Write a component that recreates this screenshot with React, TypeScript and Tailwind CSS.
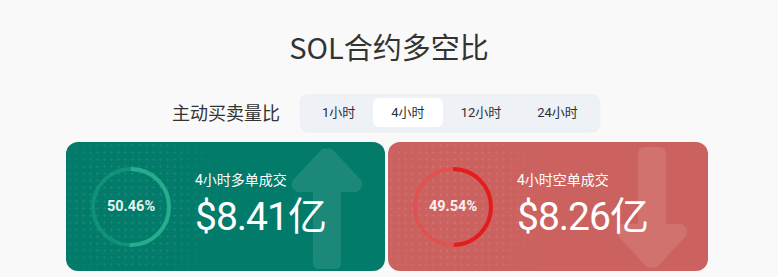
const tabs = ["1小时", "4小时", "12小时", "24小时"];

interface SideCardProps {
  tone: "long" | "short";
  percent: number;
  title: string;
  amount: string;
}

function Ring({ percent, track, bar }: { percent: number; track: string; bar: string }) {
  const r = 38;
  const c = 2 * Math.PI * r;
  return (
    <svg width="80" height="80" viewBox="0 0 80 80" className="block">
      <circle cx="40" cy="40" r={r} fill="none" stroke={track} strokeWidth="4" />
      <circle
        cx="40"
        cy="40"
        r={r}
        fill="none"
        stroke={bar}
        strokeWidth="4"
        strokeDasharray={`${(c * percent) / 100} ${c}`}
        transform="rotate(-90 40 40)"
      />
    </svg>
  );
}

function SideCard({ tone, percent, title, amount }: SideCardProps) {
  const long = tone === "long";
  return (
    <div
      className={
        "relative h-[129px] rounded-[12px] overflow-hidden flex " +
        (long ? "bg-[#027b6a]" : "bg-[#cc625f]")
      }
    >
      {/* dotted halo behind the ring */}
      <div className="absolute inset-0 bg-[radial-gradient(rgba(255,255,255,0.09)_1.2px,transparent_1.3px)] bg-[length:7px_7px] [mask-image:radial-gradient(circle_at_65px_64px,black_0px,black_45px,transparent_110px)]" />

      {/* big arrow */}
      {long ? (
        <svg className="absolute left-[223px] top-[5px]" width="76" height="122" viewBox="0 0 76 122">
          <path
            d="M38 2 Q41 0 44 3 L72 33 Q76 40 68 45 L52 45 L52 116 Q52 122 46 122 L30 122 Q24 122 24 116 L24 45 L8 45 Q0 40 4 33 L32 3 Q35 0 38 2 Z"
            fill="rgba(255,255,255,0.1)"
          />
        </svg>
      ) : (
        <svg className="absolute left-[226px] top-[5px]" width="76" height="122" viewBox="0 0 76 122">
          <path
            d="M38 120 Q41 122 44 119 L72 89 Q76 82 68 77 L52 77 L52 6 Q52 0 46 0 L30 0 Q24 0 24 6 L24 77 L8 77 Q0 82 4 89 L32 119 Q35 122 38 120 Z"
            fill="rgba(255,255,255,0.1)"
          />
        </svg>
      )}

      <div className="relative ml-[25px] mt-[25px] w-[80px] h-[80px]">
        <Ring
          percent={percent}
          track={long ? "rgba(38,175,144,0.4)" : "rgba(238,70,70,0.55)"}
          bar={long ? "#26ad8e" : "#e11d1d"}
        />
        <div className="absolute inset-0 flex items-center justify-center text-[14.5px] font-bold text-white/90 font-['Roboto','Noto_Sans_CJK_SC',sans-serif]">
          {percent.toFixed(2)}%
        </div>
      </div>

      <div className="relative ml-[24px] pt-[28px] text-white">
        <div className="text-[14px] leading-[20px] font-['Roboto','Noto_Sans_CJK_SC',sans-serif]">{title}</div>
        <div className="mt-[7px] text-[39px] leading-[40px] tracking-[-1px] font-['Roboto','Noto_Sans_CJK_SC',sans-serif]">
          {amount}
        </div>
      </div>
    </div>
  );
}

export default function App() {
  return (
    <div className="w-full h-[277px] bg-[#f9f9f9] overflow-hidden font-['Noto_Sans_CJK_SC','Noto_Sans',sans-serif]">
      <h1 className="pt-[26px] text-center text-[29px] leading-[40px] font-normal text-[#333]">SOL合约多空比</h1>

      <div className="mt-[28px] flex items-center pl-[172px] h-[37px]">
        <span className="text-[18px] text-[#333] w-[128px]">主动买卖量比</span>
        <div className="flex h-[37px] p-[4px] rounded-[8px] bg-[#eef1f5] shadow-[0_1px_2px_rgba(0,0,0,0.06)]">
          {tabs.map((t) => (
            <div
              key={t}
              className={
                "px-[18px] flex items-center text-[13px] text-[#2b2f36] rounded-[6px] font-['Roboto','Noto_Sans_CJK_SC',sans-serif] " +
                (t === "4小时" ? "bg-white" : "")
              }
            >
              {t}
            </div>
          ))}
        </div>
      </div>

      <div className="mt-[11px] pl-[66px] grid grid-cols-[319px_320px] gap-[3px]">
        <SideCard tone="long" percent={50.46} title="4小时多单成交" amount="$8.41亿" />
        <SideCard tone="short" percent={49.54} title="4小时空单成交" amount="$8.26亿" />
      </div>
    </div>
  );
}
